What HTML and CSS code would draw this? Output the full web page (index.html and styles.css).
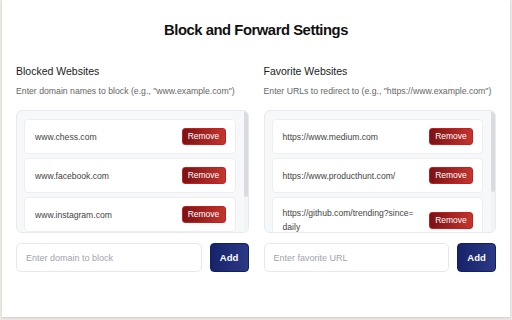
FILE: index.html
```html
<!DOCTYPE html>
<html>
<head>
<meta charset="utf-8">
<link rel="stylesheet" href="styles.css">
</head>
<body>
<div class="panel">
  <h1 class="title">Block and Forward Settings</h1>
  <div class="columns">
    <section class="col">
      <h2 class="heading">Blocked Websites</h2>
      <p class="desc">Enter domain names to block (e.g., "www.example.com")</p>
      <div class="list">
        <div class="list-inner">
          <div class="item"><span class="item-text">www.chess.com</span><button class="remove">Remove</button></div>
          <div class="item"><span class="item-text">www.facebook.com</span><button class="remove">Remove</button></div>
          <div class="item"><span class="item-text">www.instagram.com</span><button class="remove">Remove</button></div>
          <div class="item"><span class="item-text">www.youtube.com</span><button class="remove">Remove</button></div>
        </div>
        <div class="scrollbar"><div class="thumb thumb-left"></div></div>
      </div>
      <div class="add-row">
        <input class="field" type="text" placeholder="Enter domain to block">
        <button class="add">Add</button>
      </div>
    </section>
    <section class="col">
      <h2 class="heading">Favorite Websites</h2>
      <p class="desc">Enter URLs to redirect to (e.g., "https://www.example.com")</p>
      <div class="list">
        <div class="list-inner">
          <div class="item"><span class="item-text">https://www.medium.com</span><button class="remove">Remove</button></div>
          <div class="item"><span class="item-text">https://www.producthunt.com/</span><button class="remove">Remove</button></div>
          <div class="item"><span class="item-text">https://github.com/trending?since=<br>daily</span><button class="remove">Remove</button></div>
          <div class="item"><span class="item-text">https://news.ycombinator.com</span><button class="remove">Remove</button></div>
        </div>
        <div class="scrollbar"><div class="thumb thumb-right"></div></div>
      </div>
      <div class="add-row">
        <input class="field" type="text" placeholder="Enter favorite URL">
        <button class="add">Add</button>
      </div>
    </section>
  </div>
</div>
</body>
</html>
```
FILE: styles.css
```css
html, body {
  margin: 0;
  padding: 0;
}
body {
  background: #ece9e4;
  width: 512px;
  height: 320px;
  overflow: hidden;
  font-family: "Liberation Sans", Arial, sans-serif;
}
.panel {
  box-sizing: border-box;
  margin-left: 2px;
  width: 508px;
  height: 317px;
  background: #ffffff;
  box-shadow: 0 1px 2px rgba(0,0,0,0.12);
  padding: 20px 14px 0 14px;
}
.title {
  margin: 0;
  text-align: center;
  font-size: 14.8px;
  line-height: 20px;
  font-weight: 700;
  color: #111;
  letter-spacing: -0.45px;
}
.columns {
  display: flex;
  gap: 15px;
  margin-top: 24px;
}
.col {
  flex: 1;
  min-width: 0;
}
.heading {
  margin: 0;
  font-size: 10.5px;
  line-height: 14px;
  font-weight: 400;
  color: #1a1a1a;
}
.desc {
  margin: 7px 0 0 0;
  font-size: 8.7px;
  line-height: 12px;
  color: #666;
  white-space: nowrap;
}
.list {
  margin-top: 13px;
  box-sizing: border-box;
  height: 123px;
  background: #f7f8fa;
  border: 1px solid #e8eaee;
  border-radius: 6px;
  display: flex;
  overflow: hidden;
}
.list-inner {
  flex: 1;
  min-width: 0;
  overflow: hidden;
  padding: 8px 8px 8px 7px;
  display: flex;
  flex-direction: column;
  gap: 4px;
}
.scrollbar {
  flex: none;
  width: 4px;
  background: #f3f4f6;
}
.thumb {
  background: #d9dbdf;
  border-radius: 2px;
}
.thumb-left {
  height: 86px;
}
.thumb-right {
  height: 81px;
}
.item {
  flex: none;
  display: flex;
  align-items: center;
  justify-content: space-between;
  background: #fff;
  border: 1px solid #eceef1;
  border-radius: 4px;
  padding: 8px 9px 8px 10px;
  gap: 8px;
}
.item-text {
  font-size: 8.6px;
  line-height: 14px;
  color: #444;
  white-space: nowrap;
}
.remove {
  flex: none;
  width: 44px;
  height: 17px;
  padding: 0;
  border: 1px solid #c41e1e;
  border-radius: 3px;
  background: linear-gradient(90deg, #7a1215, #c3352f);
  color: #fff;
  font-family: "Liberation Sans", Arial, sans-serif;
  font-size: 8.5px;
  line-height: 15px;
}
.add-row {
  display: flex;
  gap: 8px;
  margin-top: 10px;
}
.field {
  flex: 1;
  min-width: 0;
  box-sizing: border-box;
  height: 29px;
  border: 1px solid #e6e8ec;
  border-radius: 5px;
  padding: 0 9px;
  font-family: "Liberation Sans", Arial, sans-serif;
  font-size: 9px;
  color: #333;
  outline: none;
}
.field::placeholder {
  color: #a0a4ab;
}
.add {
  flex: none;
  box-sizing: border-box;
  width: 39px;
  height: 29px;
  border: 1px solid #142059;
  border-radius: 4px;
  background: linear-gradient(90deg, #17226a, #2b3a86);
  color: #fff;
  font-family: "Liberation Sans", Arial, sans-serif;
  font-size: 9.5px;
  font-weight: 600;
  padding: 0;
}
```
